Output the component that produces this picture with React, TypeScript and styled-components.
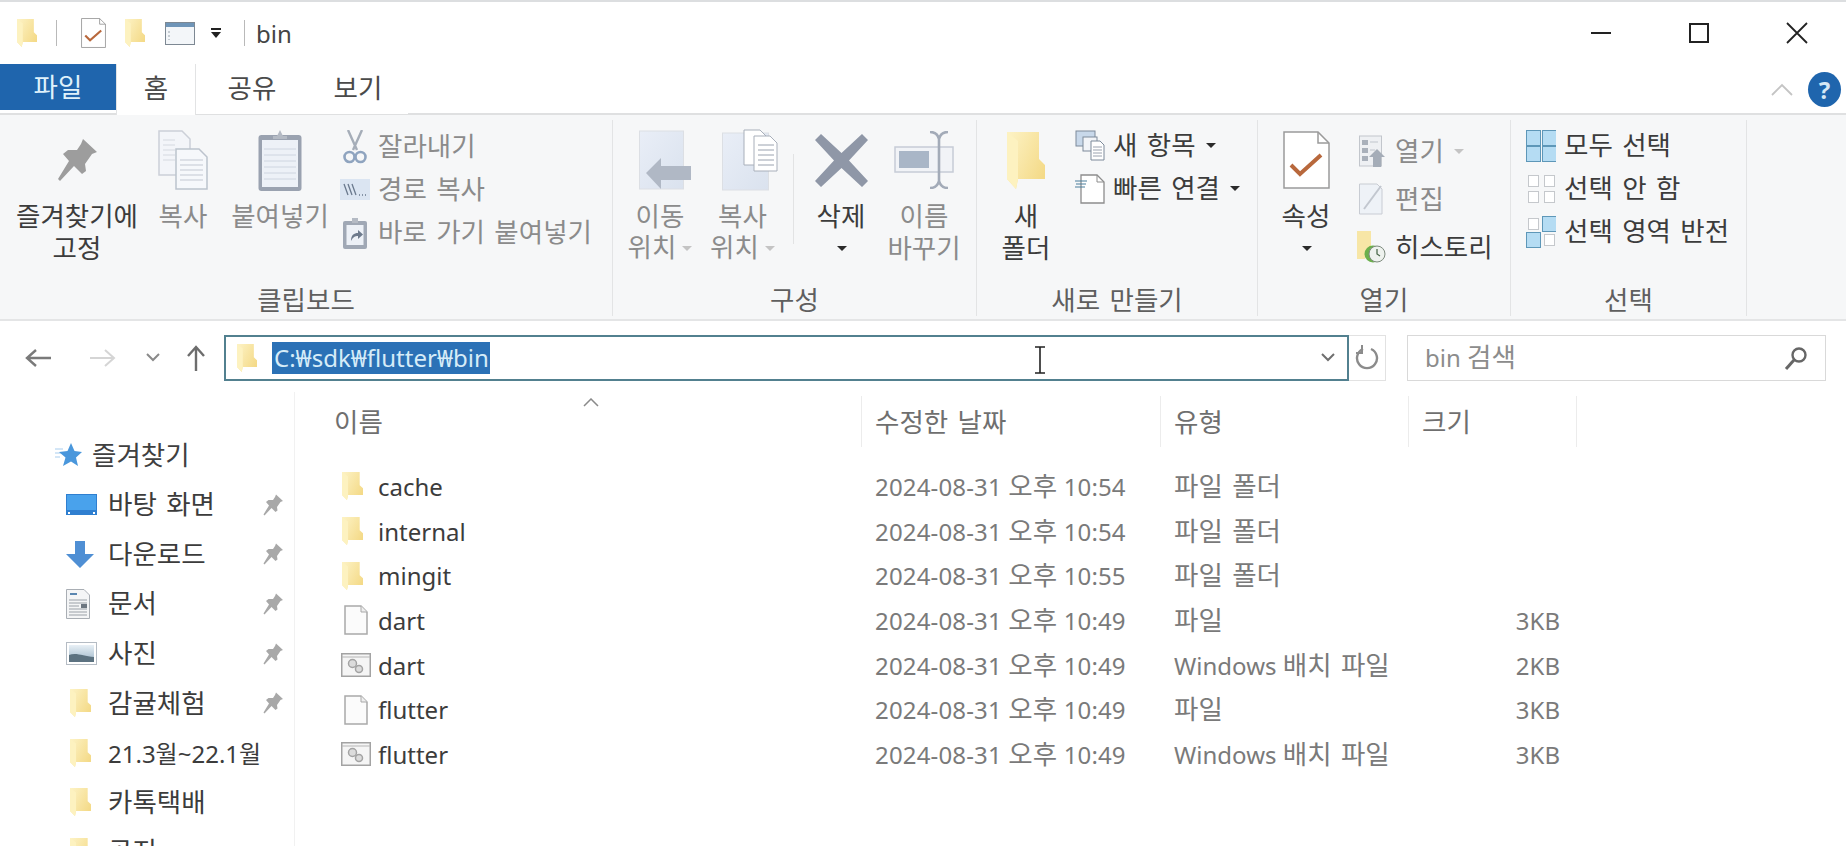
import React from "react";
import styled, {createGlobalStyle} from "styled-components";

const GlobalStyle = createGlobalStyle`
  html, body {
    margin: 0;
    padding: 0;
    background: #ffffff;
    overflow: hidden;
  }
  * {
    box-sizing: border-box;
  }
  body {
    font-family: "Noto Sans", "Noto Sans CJK KR", sans-serif;
  }
`;

const Window = styled.div`
  width: 1846px;
  height: 846px;
  display: flex;
  flex-direction: column;
  overflow: hidden;
  background: #ffffff;
  color: #333333;
  font-size: 24px;
`;

const Ko = styled.span`
  font-size: 1.105em;
  line-height: 1;
  word-spacing: 2.5px;
`;

// hangul runs come out narrower in Noto than in the reference, so they get a bit more size
function T({children}: {children: string}) {
  const parts = children.split(/([\uac00-\ud7a3]+(?: [\uac00-\ud7a3]+)*)/);
  return (
    <>
      {parts.map((part, i) => (i % 2 === 1 ? <Ko key={i}>{part}</Ko> : part))}
    </>
  );
}

const TitleBar = styled.div`
  height: 64px;
  flex: none;
  display: flex;
  align-items: center;
  border-top: 2px solid #dcdee0;
`;
const Quick = styled.span<{$ml: number}>`
  display: flex;
  align-items: center;
  margin-left: ${(p) => p.$ml}px;
`;
const QuickSep = styled.span<{$ml: number}>`
  width: 1px;
  height: 26px;
  background: #b9b9b9;
  margin-left: ${(p) => p.$ml}px;
`;
const TitleText = styled.span`
  margin-left: 11px;
  font-size: 24px;
  color: #444444;
`;
const WindowButtons = styled.div`
  margin-left: auto;
  display: flex;
  align-items: center;
`;
const WindowButton = styled.span`
  width: 98px;
  display: flex;
  justify-content: center;
`;

const TabBar = styled.div`
  height: 51px;
  flex: none;
  display: flex;
  align-items: flex-start;
  border-bottom: 2px solid #dfe0e1;
`;
const FileTab = styled.div`
  width: 116px;
  height: 46px;
  background: #1f65ad;
  color: #dff1fb;
  display: flex;
  align-items: center;
  justify-content: center;
`;
const Tab = styled.div<{$w: number; $active?: boolean}>`
  width: ${(p) => p.$w}px;
  height: ${(p) => (p.$active ? 51 : 50)}px;
  display: flex;
  align-items: center;
  justify-content: center;
  color: #4a4a4a;
  padding-bottom: 2px;
  background: #ffffff;
  border-left: ${(p) => (p.$active ? "1px solid #e2e3e4" : "none")};
  border-right: ${(p) => (p.$active ? "1px solid #e2e3e4" : "none")};
`;
const TabTools = styled.div`
  margin-left: auto;
  height: 50px;
  width: 75px;
  padding-right: 5px;
  display: flex;
  align-items: center;
  justify-content: space-between;
`;
const HelpBadge = styled.span`
  width: 33px;
  height: 35px;
  border-radius: 50%;
  background: #1f65ad;
  color: #d5e8f5;
  font-weight: 700;
  font-size: 24px;
  display: flex;
  align-items: center;
  justify-content: center;
`;

const Ribbon = styled.div`
  height: 206px;
  flex: none;
  display: flex;
  background: #f6f7f8;
  border-bottom: 2px solid #e4e5e6;
`;
const Group = styled.div<{$w: number; $plain?: boolean}>`
  width: ${(p) => p.$w}px;
  height: 196px;
  margin-top: 5px;
  display: flex;
  flex-direction: column;
  border-right: ${(p) => (p.$plain ? "none" : "1px solid #e3e4e5")};
`;
const GroupBody = styled.div<{$pl?: number}>`
  flex: 1;
  display: flex;
  padding-top: 4px;
  padding-left: ${(p) => p.$pl ?? 0}px;
`;
const GroupLabel = styled.div`
  height: 40px;
  flex: none;
  display: flex;
  align-items: flex-start;
  justify-content: center;
  padding-top: 11px;
  color: #5f5f5f;
`;
const LargeButton = styled.div<{$w: number; $ml?: number; $muted?: boolean}>`
  width: ${(p) => p.$w}px;
  margin-left: ${(p) => p.$ml ?? 0}px;
  flex: none;
  display: flex;
  flex-direction: column;
  align-items: center;
  color: ${(p) => (p.$muted ? "#8b8b8b" : "#3c3c3c")};
`;
const LargeIcon = styled.div<{$nudge?: number}>`
  height: 60px;
  margin-top: 6px;
  margin-bottom: 10px;
  padding-left: ${(p) => p.$nudge ?? 0}px;
  display: flex;
  align-items: center;
  justify-content: center;
`;
const LargeLine = styled.div`
  height: 32px;
  line-height: 32px;
  white-space: nowrap;
  display: flex;
  align-items: center;
  justify-content: center;
  gap: 4px;
`;
const Divider = styled.div`
  width: 1px;
  height: 90px;
  margin: 30px 0 0 15px;
  background: #e2e3e4;
`;
const SmallList = styled.div<{$ml?: number; $top?: number}>`
  display: flex;
  flex-direction: column;
  margin-left: ${(p) => p.$ml ?? 0}px;
  margin-top: ${(p) => p.$top ?? 0}px;
`;
const SmallRow = styled.div<{$h: number; $muted?: boolean}>`
  height: ${(p) => p.$h}px;
  display: flex;
  align-items: center;
  gap: 8px;
  white-space: nowrap;
  color: ${(p) => (p.$muted ? "#8b8b8b" : "#3c3c3c")};
`;
const SmallIcon = styled.span`
  width: 30px;
  flex: none;
  display: flex;
  align-items: center;
  justify-content: center;
`;
const Drop = styled.span<{$light?: boolean}>`
  width: 0;
  height: 0;
  display: inline-block;
  margin-left: 2px;
  border-left: 5px solid transparent;
  border-right: 5px solid transparent;
  border-top: 5px solid ${(p) => (p.$light ? "#c4c4c4" : "#2b2b2b")};
`;

const AddressRow = styled.div`
  height: 71px;
  flex: none;
  display: flex;
  align-items: center;
  padding-top: 2px;
`;
const NavButtons = styled.div`
  width: 224px;
  flex: none;
  display: flex;
  align-items: center;
  padding-left: 25px;
`;
const NavSlot = styled.span<{$ml: number}>`
  display: flex;
  margin-left: ${(p) => p.$ml}px;
`;
const AddressBox = styled.div`
  position: relative;
  width: 1125px;
  height: 46px;
  flex: none;
  display: flex;
  align-items: center;
  padding-left: 11px;
  padding-right: 12px;
  border: 2px solid #52808f;
`;
const Selected = styled.span`
  margin-left: 15px;
  padding: 0 1px 0 2px;
  height: 32px;
  line-height: 31px;
  background: #2b71b6;
  color: #d6ecf8;
  white-space: nowrap;
`;
const AddressChevron = styled.span`
  margin-left: auto;
  display: flex;
`;
const TextCursor = styled.span`
  position: absolute;
  left: 809px;
  top: 9px;
  display: flex;
`;
const RefreshBox = styled.div`
  width: 37px;
  height: 46px;
  flex: none;
  display: flex;
  align-items: center;
  justify-content: center;
  border: 1px solid #e2e2e2;
  border-left: none;
`;
const SearchBox = styled.div`
  width: 419px;
  height: 46px;
  margin-left: 21px;
  flex: none;
  display: flex;
  align-items: center;
  justify-content: space-between;
  padding: 0 17px;
  border: 1px solid #d9d9d9;
  color: #8c8c8c;
`;

const Main = styled.div`
  flex: 1;
  min-height: 0;
  display: flex;
  overflow: hidden;
`;
const Sidebar = styled.div`
  width: 295px;
  flex: none;
  padding-top: 38px;
  border-right: 1px solid #f1f1f1;
`;
const SideHead = styled.div`
  height: 50px;
  display: flex;
  align-items: center;
  gap: 10px;
  padding-left: 55px;
  color: #404040;
`;
const SideRow = styled.div`
  height: 49.6px;
  display: flex;
  align-items: center;
  padding-left: 66px;
  color: #3c3c3c;
  white-space: nowrap;
`;
const SideIcon = styled.span<{$pl?: number}>`
  width: 42px;
  flex: none;
  display: flex;
  align-items: center;
  padding-left: ${(p) => p.$pl ?? 0}px;
`;
const SidePin = styled.span`
  margin-left: auto;
  margin-right: 11px;
  display: flex;
`;
const Content = styled.div`
  flex: 1;
  min-width: 0;
`;
const columns = "567px 299px 248px 168px";
const HeaderRow = styled.div`
  display: grid;
  grid-template-columns: ${columns};
  height: 51px;
  margin-top: 4px;
  margin-bottom: 17px;
  color: #6f6f6f;
`;
const HeaderCell = styled.div<{$first?: boolean}>`
  position: relative;
  display: flex;
  align-items: center;
  padding-top: 2px;
  padding-left: ${(p) => (p.$first ? 39 : 13)}px;
  border-right: 1px solid #ececec;
`;
const SortCaret = styled.span`
  position: absolute;
  left: 288px;
  top: 2px;
  display: flex;
`;
const FileRow = styled.div`
  display: grid;
  grid-template-columns: ${columns};
  height: 44.7px;
  align-items: center;
  color: #7a7a7a;
`;
const NameCell = styled.div`
  display: flex;
  align-items: center;
  color: #3c3c3c;
  white-space: nowrap;
`;
const NameIcon = styled.span<{$folder?: boolean}>`
  width: 83px;
  flex: none;
  display: flex;
  justify-content: center;
  padding-left: 39px;
  padding-right: ${(p) => (p.$folder ? 7 : 0)}px;
`;
const DataCell = styled.div<{$spaced?: boolean}>`
  padding-left: 13px;
  white-space: nowrap;
  letter-spacing: ${(p) => (p.$spaced ? "0.15px" : "0")};
`;
const SizeCell = styled.div`
  text-align: right;
  padding-right: 17px;
`;

function Folder({w = 21, h = 28}: {w?: number; h?: number}) {
  return (
    <svg width={w} height={h} viewBox="0 0 38 57" preserveAspectRatio="none">
      <defs>
        <linearGradient id="fold" x1="0" y1="0" x2="1" y2="0.7">
          <stop offset="0" stopColor="#fdf3c6" />
          <stop offset="1" stopColor="#f4da88" />
        </linearGradient>
      </defs>
      <path d="M0 0H32V27L38 33V47H11L9 57L0 47Z" fill="url(#fold)" />
      <path d="M0 0L11 9V47L9 57L0 47Z" fill="#fdf2c0" />
    </svg>
  );
}

function CheckDoc({w, h, line}: {w: number; h: number; line: string}) {
  return (
    <svg width={w} height={h} viewBox="0 0 47 58" preserveAspectRatio="none">
      <path d="M1 1H35L46 12V57H1Z" fill="#ffffff" stroke={line} strokeWidth="1.5" />
      <path d="M35 1V12H46" fill="none" stroke={line} strokeWidth="1.5" />
      <path d="M8 34L17 43L38 24" fill="none" stroke="#b8683c" strokeWidth="4" />
    </svg>
  );
}

function PinIcon({w = 40, h = 44, fill = "#9d9d9d"}: {w?: number; h?: number; fill?: string}) {
  return (
    <svg width={w} height={h} viewBox="0 0 40 44">
      <path
        d="M26 1L40 14L35 16L28 26L29 33L25 36L17 28L3 43L1 41L12 23L6 16L11 12L20 12L24 6Z"
        fill={fill}
      />
    </svg>
  );
}

function CopyIcon() {
  const lines = [16, 21, 26, 31, 36];
  return (
    <svg width="50" height="60" viewBox="0 0 50 60">
      <path d="M1 1H24L32 9V45H1Z" fill="#f3f5f9" stroke="#ccd0d8" strokeWidth="1.5" />
      <path d="M18 19H41L49 27V59H18Z" fill="#f6f8fb" stroke="#bcc3cd" strokeWidth="1.5" />
      {lines.map((y) => (
        <line key={y} x1="5" x2="17" y1={y - 6} y2={y - 6} stroke="#d5d9e0" />
      ))}
      {lines.map((y) => (
        <line key={y} x1="22" x2="45" y1={y + 14} y2={y + 14} stroke="#c3c8d2" />
      ))}
    </svg>
  );
}

function PasteIcon() {
  const lines = [20, 26, 32, 38, 44, 50];
  return (
    <svg width="44" height="62" viewBox="0 0 44 62">
      <rect x="0.5" y="6" width="43" height="56" rx="3" fill="#9aa2b0" />
      <rect x="4" y="11" width="36" height="47" fill="#edf1f7" />
      {lines.map((y) => (
        <line key={y} x1="6" x2="38" y1={y} y2={y} stroke="#ced5e0" />
      ))}
      <path d="M15 10V7H19L22 1L25 7H29V10Z" fill="#b4bac4" />
    </svg>
  );
}

function ScissorsIcon() {
  return (
    <svg width="24" height="34" viewBox="0 0 24 34">
      <path d="M5 0L14 20M19 0L10 20" stroke="#a5adb8" strokeWidth="2.4" fill="none" />
      <circle cx="6.5" cy="27" r="5" fill="none" stroke="#8fa4bf" strokeWidth="2.6" />
      <circle cx="17.5" cy="27" r="5" fill="none" stroke="#8fa4bf" strokeWidth="2.6" />
    </svg>
  );
}

function PathIcon() {
  return (
    <svg width="30" height="21" viewBox="0 0 30 21">
      <rect width="30" height="21" fill="#dbe5f2" />
      <path d="M4 5L8 16M8 5L12 16M12 5L16 16" stroke="#6b7a8e" strokeWidth="1.3" />
      <path d="M19 16H20M22 16H23M25 16H26" stroke="#6b7a8e" strokeWidth="1.6" />
    </svg>
  );
}

function ShortcutPasteIcon() {
  return (
    <svg width="24" height="32" viewBox="0 0 24 32">
      <rect y="4" width="24" height="28" rx="2" fill="#a0a8b5" />
      <rect x="3.5" y="8" width="17" height="20" fill="#edf1f7" />
      <path d="M9 1H15V6H9Z" fill="#b4bac4" />
      <path d="M8 24C8 18 11 16 15 16V13L20 17.5L15 22V19C12 19 10 20 8 24Z" fill="#6d7a8c" />
    </svg>
  );
}

function MoveIcon() {
  return (
    <svg width="52" height="60" viewBox="0 0 52 60">
      <defs>
        <linearGradient id="sheet" x1="0" y1="0" x2="1" y2="1">
          <stop offset="0" stopColor="#e9eef7" />
          <stop offset="1" stopColor="#dae2ee" />
        </linearGradient>
      </defs>
      <rect x="0.5" y="1" width="44" height="58" fill="url(#sheet)" stroke="#dcdfe4" />
      <path d="M22 36H52V50H22V59L7 43L22 28Z" fill="#b0b8c5" />
    </svg>
  );
}

function CopyToIcon() {
  return (
    <svg width="56" height="62" viewBox="0 0 56 62">
      <rect x="0.5" y="4" width="46" height="57" fill="url(#sheet)" stroke="#dcdfe4" />
      <path d="M22 1H38L44 7V36H22Z" fill="#ffffff" stroke="#a8afba" />
      <path d="M32 7H48L55 14V42H32Z" fill="#ffffff" stroke="#a8afba" />
      {[16, 21, 26, 31, 36].map((y) => (
        <line key={y} x1="36" x2="52" y1={y} y2={y} stroke="#9aa2af" />
      ))}
    </svg>
  );
}

function DeleteIcon() {
  return (
    <svg width="53" height="53" viewBox="0 0 53 53">
      <path d="M6 0L26.5 19L47 0L53 6L34 26.5L53 47L47 53L26.5 34L6 53L0 47L19 26.5L0 6Z" fill="#8f97a7" />
    </svg>
  );
}

function RenameIcon() {
  return (
    <svg width="60" height="58" viewBox="0 0 60 58">
      <rect x="1" y="16" width="58" height="25" fill="#f1f3f7" stroke="#c6ccd6" strokeWidth="1.5" />
      <rect x="5" y="20" width="30" height="17" fill="#a9b6c7" />
      <path d="M36 1C42 1 44 4 45 8C46 4 48 1 54 1M45 8V50M36 57C42 57 44 54 45 50C46 54 48 57 54 57" fill="none" stroke="#a3abb8" strokeWidth="2.6" />
    </svg>
  );
}

function NewItemIcon() {
  return (
    <svg width="30" height="31" viewBox="0 0 30 31">
      <rect x="1" y="1" width="19" height="15" fill="#c8d8ea" stroke="#7d8a9a" />
      <rect x="8" y="7" width="14" height="14" fill="#f2f4f8" stroke="#7d8a9a" />
      <path d="M16 11H25L29 15V30H16Z" fill="#ffffff" stroke="#7d8a9a" />
      {[17, 20, 23, 26].map((y) => (
        <line key={y} x1="18" x2="27" y1={y} y2={y} stroke="#9aa2af" />
      ))}
    </svg>
  );
}

function QuickAccessIcon() {
  return (
    <svg width="30" height="30" viewBox="0 0 30 30">
      <path d="M6 1H22L29 8V29H6Z" fill="#ffffff" stroke="#8d8d8d" strokeWidth="1.3" />
      <path d="M22 1V8H29" fill="none" stroke="#8d8d8d" />
      <path d="M0 7H12M1 10H11M0 13H10" stroke="#4a7f9c" strokeWidth="1.2" />
    </svg>
  );
}

function OpenIcon() {
  return (
    <svg width="26" height="32" viewBox="0 0 26 32">
      <rect x="0.5" y="1" width="22" height="30" fill="#eef0f3" stroke="#c2c6cc" />
      <rect x="3" y="5" width="6" height="5" fill="#a9b0ba" />
      <rect x="3" y="13" width="6" height="5" fill="#a9b0ba" />
      <rect x="3" y="21" width="6" height="5" fill="#a9b0ba" />
      <path d="M11 7H19M11 15H16" stroke="#c0c5cc" />
      <path d="M18 14L26 22H22V32H14V22H10Z" fill="#a5adb8" />
    </svg>
  );
}

function EditIcon() {
  return (
    <svg width="26" height="32" viewBox="0 0 26 32">
      <path d="M0.5 1H18L23 6V31H0.5Z" fill="#eef2f7" stroke="#c8ccd3" />
      <path d="M5 26L22 3" stroke="#c2c7cf" strokeWidth="2" />
    </svg>
  );
}

function HistoryIcon() {
  return (
    <svg width="30" height="32" viewBox="0 0 30 32">
      <path d="M0 0H14V18H0Z" fill="#f5e39a" />
      <path d="M0 0H14V14L8 28H0Z" fill="#f7e6a6" />
      <circle cx="16" cy="23" r="8.5" fill="#6bb04c" />
      <circle cx="20" cy="23" r="8" fill="#eef2ee" stroke="#7d8a7d" />
      <path d="M20 18V23L23 25" stroke="#4e6b4e" fill="none" strokeWidth="1.3" />
    </svg>
  );
}

function SelectGrid({mode}: {mode: "all" | "none" | "invert"}) {
  const on = (i: number) => mode === "all" || (mode === "invert" && (i === 1 || i === 2));
  const cells = [
    [0, 0],
    [16, 0],
    [0, 16],
    [16, 16],
  ];
  return (
    <svg width="30" height="32" viewBox="0 0 30 32">
      {cells.map(([x, y], i) =>
        on(i) ? (
          <rect
            key={i}
            x={x + 0.5}
            y={y + 0.5}
            width="14"
            height="15"
            fill="#b5dcf3"
            stroke="#5e97b8"
          />
        ) : (
          <rect
            key={i}
            x={x + 2.5}
            y={y + 2.5}
            width="10"
            height="11"
            fill="#ffffff"
            stroke="#c5c8cc"
          />
        ),
      )}
    </svg>
  );
}

function WindowIcon() {
  return (
    <svg width="30" height="23" viewBox="0 0 30 23">
      <rect x="0.5" y="0.5" width="29" height="22" fill="#f3f6f9" stroke="#7d8893" />
      <rect x="1" y="1" width="28" height="4" fill="#6f95b8" />
      <path d="M4 9V18" stroke="#9aa4ad" strokeDasharray="2 2" />
    </svg>
  );
}

function QuickDrop() {
  return (
    <svg width="12" height="11" viewBox="0 0 12 11">
      <rect x="1" width="10" height="2" fill="#222222" />
      <path d="M1 4H11L6 10Z" fill="#222222" />
    </svg>
  );
}

function Arrow({dir, color, w = 26}: {dir: "left" | "right"; color: string; w?: number}) {
  return (
    <svg width={w} height="20" viewBox="0 0 26 20">
      {dir === "left" ? (
        <path d="M26 10H2M11 2L2 10L11 18" fill="none" stroke={color} strokeWidth="2.4" />
      ) : (
        <path d="M0 10H24M15 2L24 10L15 18" fill="none" stroke={color} strokeWidth="2" />
      )}
    </svg>
  );
}

function Chevron({color = "#6f6f6f", w = 14, h = 9}: {color?: string; w?: number; h?: number}) {
  return (
    <svg width={w} height={h} viewBox="0 0 14 9">
      <path d="M1 1L7 7L13 1" fill="none" stroke={color} strokeWidth="2" />
    </svg>
  );
}

function ChevronUp() {
  return (
    <svg width="22" height="13" viewBox="0 0 22 13">
      <path d="M1 12L11 2L21 12" fill="none" stroke="#c4c4c4" strokeWidth="1.8" />
    </svg>
  );
}

function UpArrow() {
  return (
    <svg width="20" height="26" viewBox="0 0 20 26">
      <path d="M10 26V2M2 11L10 2L18 11" fill="none" stroke="#6d6d6d" strokeWidth="2.4" />
    </svg>
  );
}

function IBeam() {
  return (
    <svg width="10" height="28" viewBox="0 0 10 28">
      <path d="M0 1H10M0 27H10M5 1V27" stroke="#222222" strokeWidth="1.6" fill="none" />
    </svg>
  );
}

function Refresh() {
  return (
    <svg width="24" height="26" viewBox="0 0 24 26">
      <path d="M8 4A10 10 0 1 0 16 4" fill="none" stroke="#8b8b8b" strokeWidth="2.4" />
      <path d="M7 0V8H1" fill="none" stroke="#8b8b8b" strokeWidth="2" />
    </svg>
  );
}

function SearchGlass() {
  return (
    <svg width="24" height="24" viewBox="0 0 24 24">
      <circle cx="15" cy="9" r="6.5" fill="none" stroke="#666666" strokeWidth="2.4" />
      <path d="M10 14L2 23" stroke="#666666" strokeWidth="3" />
    </svg>
  );
}

function StarIcon() {
  return (
    <svg width="27" height="24" viewBox="0 0 27 24">
      <path d="M0 6H8M0 10H6M0 14H5" stroke="#a8cdee" strokeWidth="1" />
      <path d="M16 0L19.5 8L27 9L21 14.5L23 23L16 18.5L8 23L10.5 14.5L4 9L12.5 8Z" fill="#4a97dc" />
    </svg>
  );
}

function DesktopIcon() {
  return (
    <svg width="31" height="21" viewBox="0 0 31 21">
      <rect width="31" height="21" fill="#2f7fd0" />
      <rect x="1" y="1" width="29" height="15" fill="#49a2ec" />
      <rect x="2" y="18" width="2" height="2" fill="#ffffff" />
      <rect x="27" y="18" width="2" height="2" fill="#ffffff" />
    </svg>
  );
}

function DownloadIcon() {
  return (
    <svg width="28" height="27" viewBox="0 0 28 27">
      <path d="M9 0H19V13H28L14 27L0 13H9Z" fill="#4f8fd4" />
    </svg>
  );
}

function DocIcon() {
  return (
    <svg width="24" height="30" viewBox="0 0 24 30">
      <path d="M0.5 0.5H18L23.5 6V29.5H0.5Z" fill="#f4f5f6" stroke="#a9aeb4" />
      <path d="M4 5H11" stroke="#5a86b0" strokeWidth="2" />
      <path d="M3 11H21M3 14H21M3 17H13M3 20H21M3 23H21M3 26H21" stroke="#9aa0a7" />
      <rect x="15" y="15" width="6" height="4" fill="#6d7680" />
    </svg>
  );
}

function PictureIcon() {
  return (
    <svg width="31" height="23" viewBox="0 0 31 23">
      <defs>
        <linearGradient id="sky" x1="0" y1="0" x2="0" y2="1">
          <stop offset="0" stopColor="#e8f0f6" />
          <stop offset="1" stopColor="#9db6c8" />
        </linearGradient>
      </defs>
      <rect x="0.5" y="0.5" width="30" height="22" fill="#ffffff" stroke="#b5bcc4" />
      <rect x="3" y="3" width="25" height="17" fill="url(#sky)" />
      <path d="M3 13C10 10 17 14 28 15V20H3Z" fill="#5c7280" />
    </svg>
  );
}

function PageIcon() {
  return (
    <svg width="24" height="30" viewBox="0 0 24 30">
      <path d="M1 1H17L23 7V29H1Z" fill="#fbfbfb" stroke="#a9a9a9" strokeWidth="1.5" />
      <path d="M17 1V7H23" fill="#eeeeee" stroke="#a9a9a9" />
    </svg>
  );
}

function BatchIcon() {
  return (
    <svg width="30" height="24" viewBox="0 0 30 24">
      <rect x="0.75" y="0.75" width="28.5" height="22.5" fill="#f5f5f5" stroke="#a3a3a3" strokeWidth="1.5" />
      <path d="M1 4H29" stroke="#b5b5b5" />
      <circle cx="11.5" cy="10.5" r="4" fill="#dcdcdc" stroke="#a3a3a3" strokeWidth="1.5" />
      <circle cx="18" cy="16" r="3.5" fill="#dcdcdc" stroke="#a3a3a3" strokeWidth="1.5" />
    </svg>
  );
}

const sideItems = [
  {name: "바탕 화면", icon: <DesktopIcon />, pin: true},
  {name: "다운로드", icon: <DownloadIcon />, pin: true},
  {name: "문서", icon: <DocIcon />, pin: true},
  {name: "사진", icon: <PictureIcon />, pin: true},
  {name: "감귤체험", icon: <Folder />, pin: true, folder: true},
  {name: "21.3월~22.1월", icon: <Folder />, folder: true},
  {name: "카톡택배", icon: <Folder />, folder: true},
  {name: "공지", icon: <Folder />, folder: true},
];

const files = [
  {name: "cache", date: "2024-08-31 오후 10:54", type: "파일 폴더", size: "", icon: <Folder />, folder: true},
  {name: "internal", date: "2024-08-31 오후 10:54", type: "파일 폴더", size: "", icon: <Folder />, folder: true},
  {name: "mingit", date: "2024-08-31 오후 10:55", type: "파일 폴더", size: "", icon: <Folder />, folder: true},
  {name: "dart", date: "2024-08-31 오후 10:49", type: "파일", size: "3KB", icon: <PageIcon />},
  {name: "dart", date: "2024-08-31 오후 10:49", type: "Windows 배치 파일", size: "2KB", icon: <BatchIcon />},
  {name: "flutter", date: "2024-08-31 오후 10:49", type: "파일", size: "3KB", icon: <PageIcon />},
  {name: "flutter", date: "2024-08-31 오후 10:49", type: "Windows 배치 파일", size: "3KB", icon: <BatchIcon />},
];

export default function App() {
  return (
    <Window>
      <GlobalStyle />
      <TitleBar>
        <Quick $ml={17}>
          <Folder w={20} h={28} />
        </Quick>
        <QuickSep $ml={19} />
        <Quick $ml={24}>
          <CheckDoc w={25} h={30} line="#8d8d8d" />
        </Quick>
        <Quick $ml={19}>
          <Folder w={20} h={28} />
        </Quick>
        <Quick $ml={20}>
          <WindowIcon />
        </Quick>
        <Quick $ml={15}>
          <QuickDrop />
        </Quick>
        <QuickSep $ml={22} />
        <TitleText>bin</TitleText>
        <WindowButtons>
          <WindowButton>
            <svg width="20" height="2" viewBox="0 0 20 2">
              <rect width="20" height="2" fill="#222222" />
            </svg>
          </WindowButton>
          <WindowButton>
            <svg width="20" height="20" viewBox="0 0 20 20">
              <rect x="1" y="1" width="18" height="18" fill="none" stroke="#222222" strokeWidth="2" />
            </svg>
          </WindowButton>
          <WindowButton>
            <svg width="22" height="22" viewBox="0 0 22 22">
              <path d="M1 1L21 21M21 1L1 21" stroke="#222222" strokeWidth="1.8" />
            </svg>
          </WindowButton>
        </WindowButtons>
      </TitleBar>

      <TabBar>
        <FileTab>
          <T>파일</T>
        </FileTab>
        <Tab $w={80} $active>
          <T>홈</T>
        </Tab>
        <Tab $w={112}>
          <T>공유</T>
        </Tab>
        <Tab $w={100}>
          <T>보기</T>
        </Tab>
        <TabTools>
          <ChevronUp />
          <HelpBadge>?</HelpBadge>
        </TabTools>
      </TabBar>

      <Ribbon>
        <Group $w={613}>
          <GroupBody>
            <LargeButton $w={154}>
              <LargeIcon>
                <PinIcon />
              </LargeIcon>
              <LargeLine>
                <T>즐겨찾기에</T>
              </LargeLine>
              <LargeLine>
                <T>고정</T>
              </LargeLine>
            </LargeButton>
            <LargeButton $w={58} $muted>
              <LargeIcon>
                <CopyIcon />
              </LargeIcon>
              <LargeLine>
                <T>복사</T>
              </LargeLine>
            </LargeButton>
            <LargeButton $w={116} $ml={10} $muted>
              <LargeIcon>
                <PasteIcon />
              </LargeIcon>
              <LargeLine>
                <T>붙여넣기</T>
              </LargeLine>
            </LargeButton>
            <SmallList $ml={2} $top={1}>
              <SmallRow $h={43} $muted>
                <SmallIcon>
                  <ScissorsIcon />
                </SmallIcon>
                <span>
                  <T>잘라내기</T>
                </span>
              </SmallRow>
              <SmallRow $h={43} $muted>
                <SmallIcon>
                  <PathIcon />
                </SmallIcon>
                <span>
                  <T>경로 복사</T>
                </span>
              </SmallRow>
              <SmallRow $h={43} $muted>
                <SmallIcon>
                  <ShortcutPasteIcon />
                </SmallIcon>
                <span>
                  <T>바로 가기 붙여넣기</T>
                </span>
              </SmallRow>
            </SmallList>
          </GroupBody>
          <GroupLabel>
            <T>클립보드</T>
          </GroupLabel>
        </Group>

        <Group $w={364}>
          <GroupBody>
            <LargeButton $w={94} $muted>
              <LargeIcon $nudge={10}>
                <MoveIcon />
              </LargeIcon>
              <LargeLine>
                <T>이동</T>
              </LargeLine>
              <LargeLine>
                <span>
                  <T>위치</T>
                </span>
                <Drop $light />
              </LargeLine>
            </LargeButton>
            <LargeButton $w={71} $muted>
              <LargeIcon $nudge={14}>
                <CopyToIcon />
              </LargeIcon>
              <LargeLine>
                <T>복사</T>
              </LargeLine>
              <LargeLine>
                <span>
                  <T>위치</T>
                </span>
                <Drop $light />
              </LargeLine>
            </LargeButton>
            <Divider />
            <LargeButton $w={94}>
              <LargeIcon>
                <DeleteIcon />
              </LargeIcon>
              <LargeLine>
                <T>삭제</T>
              </LargeLine>
              <LargeLine>
                <Drop />
              </LargeLine>
            </LargeButton>
            <LargeButton $w={72} $muted>
              <LargeIcon>
                <RenameIcon />
              </LargeIcon>
              <LargeLine>
                <T>이름</T>
              </LargeLine>
              <LargeLine>
                <T>바꾸기</T>
              </LargeLine>
            </LargeButton>
          </GroupBody>
          <GroupLabel>
            <T>구성</T>
          </GroupLabel>
        </Group>

        <Group $w={281}>
          <GroupBody>
            <LargeButton $w={98}>
              <LargeIcon>
                <Folder w={38} h={57} />
              </LargeIcon>
              <LargeLine>
                <T>새</T>
              </LargeLine>
              <LargeLine>
                <T>폴더</T>
              </LargeLine>
            </LargeButton>
            <SmallList>
              <SmallRow $h={43}>
                <SmallIcon>
                  <NewItemIcon />
                </SmallIcon>
                <span>
                  <T>새 항목</T>
                </span>
                <Drop />
              </SmallRow>
              <SmallRow $h={43}>
                <SmallIcon>
                  <QuickAccessIcon />
                </SmallIcon>
                <span>
                  <T>빠른 연결</T>
                </span>
                <Drop />
              </SmallRow>
            </SmallList>
          </GroupBody>
          <GroupLabel>
            <T>새로 만들기</T>
          </GroupLabel>
        </Group>

        <Group $w={253}>
          <GroupBody>
            <LargeButton $w={96}>
              <LargeIcon>
                <CheckDoc w={47} h={58} line="#9a9a9a" />
              </LargeIcon>
              <LargeLine>
                <T>속성</T>
              </LargeLine>
              <LargeLine>
                <Drop />
              </LargeLine>
            </LargeButton>
            <SmallList $ml={3} $top={3}>
              <SmallRow $h={48} $muted>
                <SmallIcon>
                  <OpenIcon />
                </SmallIcon>
                <span>
                  <T>열기</T>
                </span>
                <Drop $light />
              </SmallRow>
              <SmallRow $h={48} $muted>
                <SmallIcon>
                  <EditIcon />
                </SmallIcon>
                <span>
                  <T>편집</T>
                </span>
              </SmallRow>
              <SmallRow $h={48}>
                <SmallIcon>
                  <HistoryIcon />
                </SmallIcon>
                <span>
                  <T>히스토리</T>
                </span>
              </SmallRow>
            </SmallList>
          </GroupBody>
          <GroupLabel>
            <T>열기</T>
          </GroupLabel>
        </Group>

        <Group $w={236}>
          <GroupBody $pl={15}>
            <SmallList>
              <SmallRow $h={43}>
                <SmallIcon>
                  <SelectGrid mode="all" />
                </SmallIcon>
                <span>
                  <T>모두 선택</T>
                </span>
              </SmallRow>
              <SmallRow $h={43}>
                <SmallIcon>
                  <SelectGrid mode="none" />
                </SmallIcon>
                <span>
                  <T>선택 안 함</T>
                </span>
              </SmallRow>
              <SmallRow $h={43}>
                <SmallIcon>
                  <SelectGrid mode="invert" />
                </SmallIcon>
                <span>
                  <T>선택 영역 반전</T>
                </span>
              </SmallRow>
            </SmallList>
          </GroupBody>
          <GroupLabel>
            <T>선택</T>
          </GroupLabel>
        </Group>
      </Ribbon>

      <AddressRow>
        <NavButtons>
          <NavSlot $ml={0}>
            <Arrow dir="left" color="#7a7a7a" />
          </NavSlot>
          <NavSlot $ml={39}>
            <Arrow dir="right" color="#d5d5d5" />
          </NavSlot>
          <NavSlot $ml={30}>
            <Chevron color="#8a8a8a" />
          </NavSlot>
          <NavSlot $ml={26}>
            <UpArrow />
          </NavSlot>
        </NavButtons>
        <AddressBox>
          <Folder w={20} h={28} />
          <Selected>C:₩sdk₩flutter₩bin</Selected>
          <AddressChevron>
            <Chevron />
          </AddressChevron>
          <TextCursor>
            <IBeam />
          </TextCursor>
        </AddressBox>
        <RefreshBox>
          <Refresh />
        </RefreshBox>
        <SearchBox>
          <span>
            <T>bin 검색</T>
          </span>
          <SearchGlass />
        </SearchBox>
      </AddressRow>

      <Main>
        <Sidebar>
          <SideHead>
            <StarIcon />
            <span>
              <T>즐겨찾기</T>
            </span>
          </SideHead>
          {sideItems.map((item) => (
            <SideRow key={item.name}>
              <SideIcon $pl={item.folder ? 4 : 0}>{item.icon}</SideIcon>
              <span>
                {item.folder && item.name.startsWith("21") ? item.name : <T>{item.name}</T>}
              </span>
              {item.pin && (
                <SidePin>
                  <PinIcon w={20} h={22} fill="#a8a8a8" />
                </SidePin>
              )}
            </SideRow>
          ))}
        </Sidebar>
        <Content>
          <HeaderRow>
            <HeaderCell $first>
              <span>
                <T>이름</T>
              </span>
              <SortCaret>
                <svg width="16" height="9" viewBox="0 0 16 9">
                  <path d="M1 8L8 1L15 8" fill="none" stroke="#8a8a8a" strokeWidth="1.5" />
                </svg>
              </SortCaret>
            </HeaderCell>
            <HeaderCell>
              <span>
                <T>수정한 날짜</T>
              </span>
            </HeaderCell>
            <HeaderCell>
              <span>
                <T>유형</T>
              </span>
            </HeaderCell>
            <HeaderCell>
              <span>
                <T>크기</T>
              </span>
            </HeaderCell>
          </HeaderRow>
          {files.map((file, i) => (
            <FileRow key={i}>
              <NameCell>
                <NameIcon $folder={file.folder}>{file.icon}</NameIcon>
                {file.name}
              </NameCell>
              <DataCell $spaced>
                <T>{file.date}</T>
              </DataCell>
              <DataCell>
                <T>{file.type}</T>
              </DataCell>
              <SizeCell>{file.size}</SizeCell>
            </FileRow>
          ))}
        </Content>
      </Main>
    </Window>
  );
}
